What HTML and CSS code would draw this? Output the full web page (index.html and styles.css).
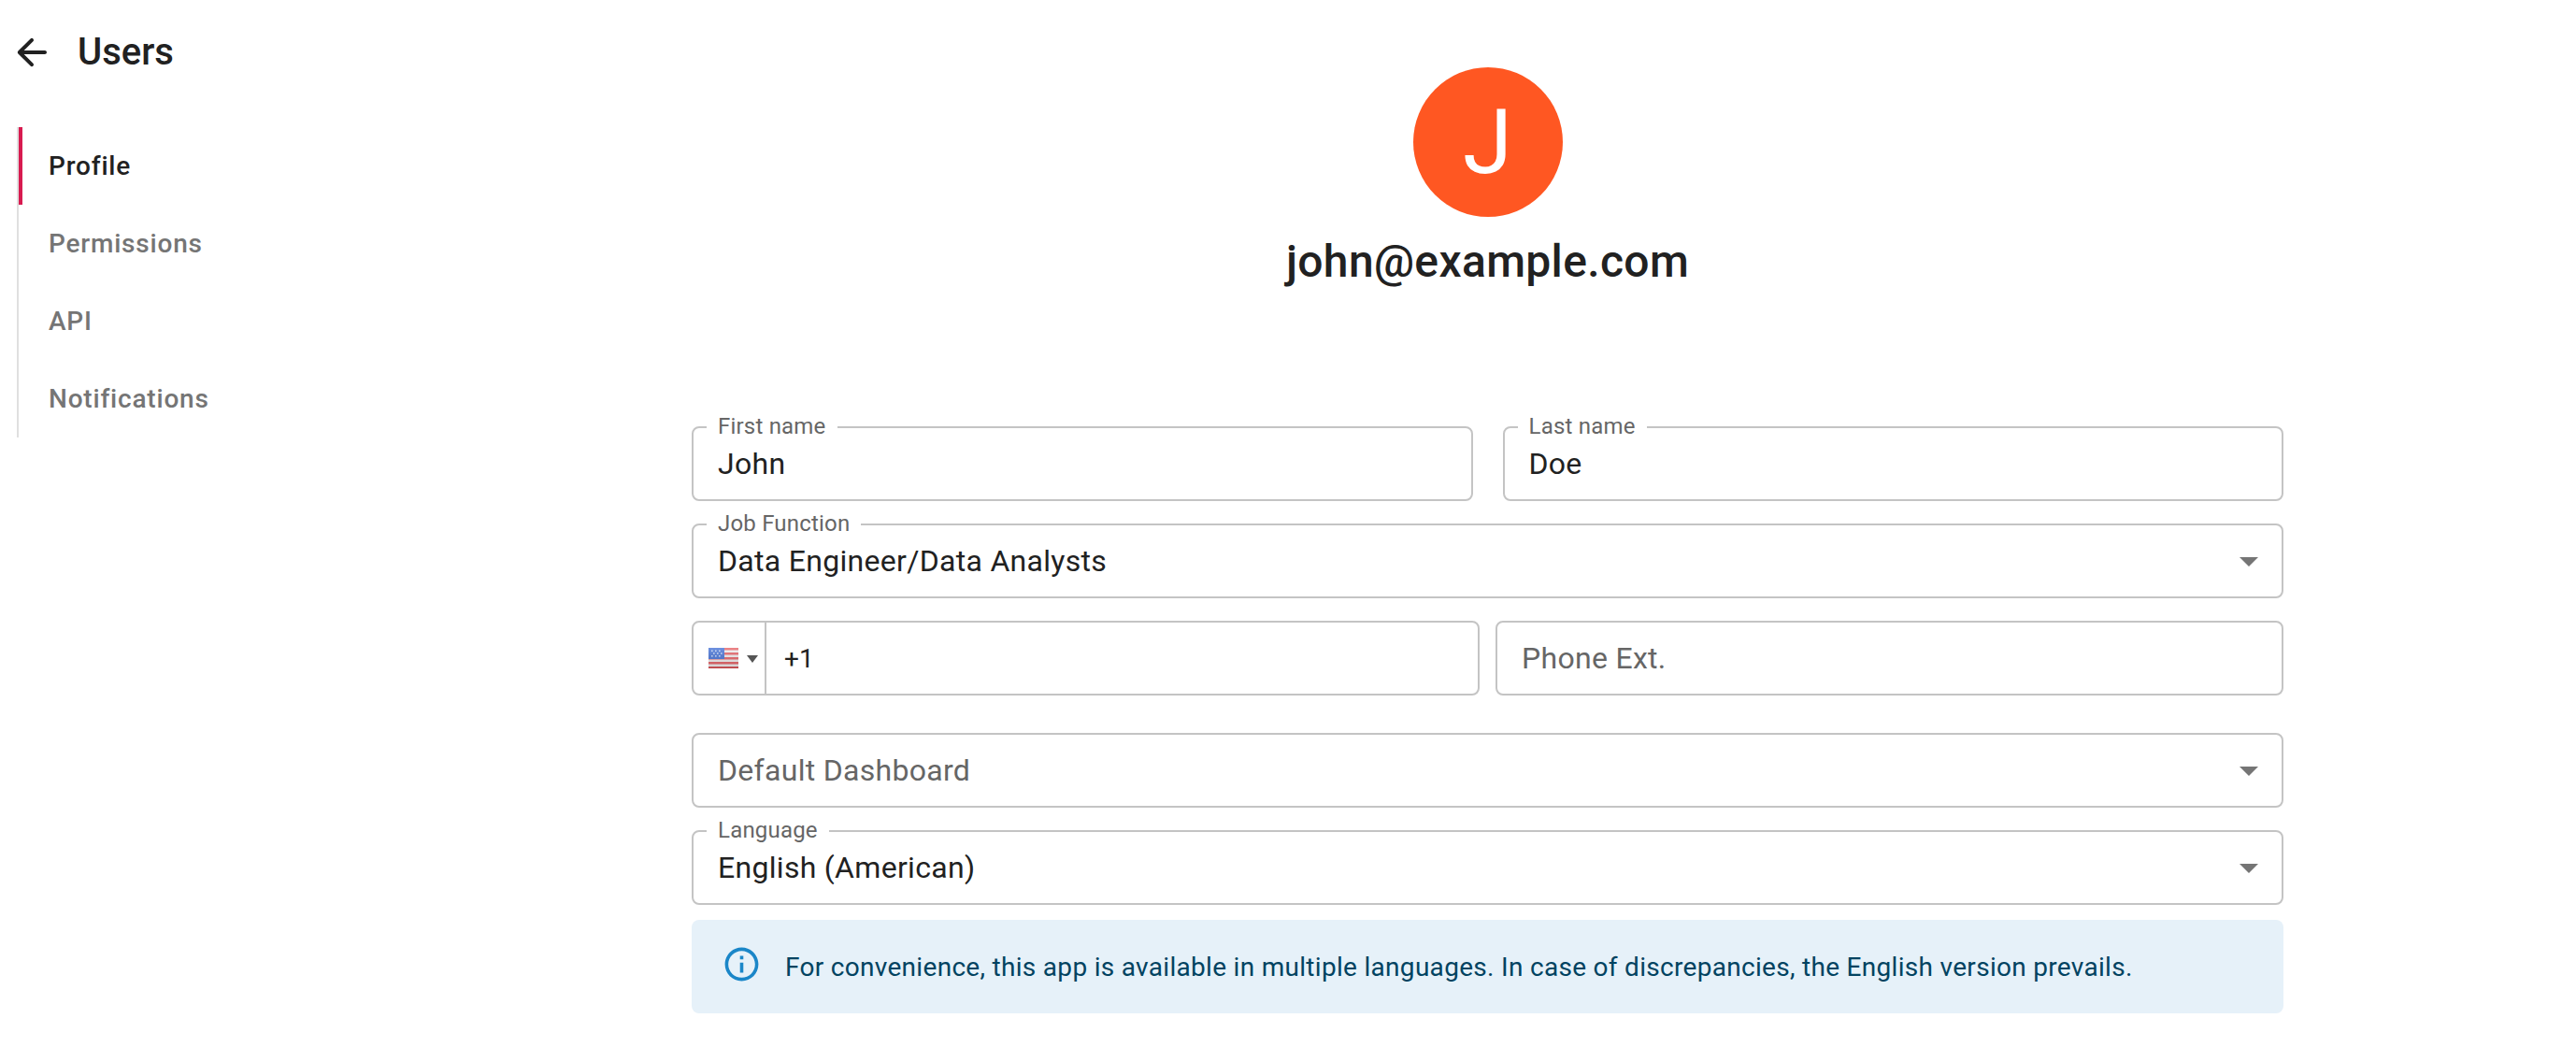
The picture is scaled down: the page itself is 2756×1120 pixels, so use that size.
FILE: index.html
```html
<!DOCTYPE html>
<html lang="en">
<head>
    <meta charset="UTF-8">
    <meta name="viewport" content="width=device-width, initial-scale=1.0">
    <title>Users - Profile</title>
    <link rel="stylesheet" href="styles.css">
</head>
<body>
    <div class="page">
        <aside class="sidebar">
            <div class="sidebar-head">
                <svg class="back-icon" viewBox="0 0 24 24"><path d="M19 11H7.83l4.88-4.88c.39-.39.39-1.03 0-1.42-.39-.39-1.02-.39-1.41 0l-6.59 6.59c-.39.39-.39 1.02 0 1.41l6.59 6.59c.39.39 1.02.39 1.41 0 .39-.39.39-1.02 0-1.41L7.83 13H19c.55 0 1-.45 1-1s-.45-1-1-1z"/></svg>
                <h1>Users</h1>
            </div>
            <nav class="tabs">
                <a class="tab active">Profile</a>
                <a class="tab">Permissions</a>
                <a class="tab">API</a>
                <a class="tab">Notifications</a>
            </nav>
        </aside>

        <main class="content">
            <div class="avatar">J</div>
            <h2 class="email">john@example.com</h2>

            <div class="row names">
                <div class="field">
                    <span class="field-label">First name</span>
                    <span class="value">John</span>
                </div>
                <div class="field">
                    <span class="field-label">Last name</span>
                    <span class="value">Doe</span>
                </div>
            </div>

            <div class="field select">
                <span class="field-label">Job Function</span>
                <span class="value">Data Engineer/Data Analysts</span>
                <span class="caret"></span>
            </div>

            <div class="row phones">
                <div class="field phone">
                    <div class="flag-select">
                        <svg class="flag" viewBox="0 0 32 22">
                            <defs>
                                <linearGradient id="gloss" x1="0" y1="0" x2="0" y2="1">
                                    <stop offset="0" stop-color="#fff" stop-opacity="0.2"/>
                                    <stop offset="1" stop-color="#000" stop-opacity="0.12"/>
                                </linearGradient>
                            </defs>
                            <rect width="32" height="22" fill="#f3f0f0"/>
                            <rect y="0" width="32" height="2.5" fill="#e8666a"/>
                            <rect y="5" width="32" height="2.5" fill="#e8666a"/>
                            <rect y="10" width="32" height="2.5" fill="#e8666a"/>
                            <rect y="15" width="32" height="2.5" fill="#e8666a"/>
                            <rect y="20" width="32" height="2" fill="#d9575b"/>
                            <rect width="17" height="12" fill="#4a76d8"/>
                            <g fill="#c4d4f5">
                                <rect x="3" y="2.5" width="1.6" height="1.6"/>
                                <rect x="7" y="2.5" width="1.6" height="1.6"/>
                                <rect x="11" y="2.5" width="1.6" height="1.6"/>
                                <rect x="5" y="5.2" width="1.6" height="1.6"/>
                                <rect x="9" y="5.2" width="1.6" height="1.6"/>
                                <rect x="13" y="5.2" width="1.6" height="1.6"/>
                                <rect x="3" y="8" width="1.6" height="1.6"/>
                                <rect x="7" y="8" width="1.6" height="1.6"/>
                                <rect x="11" y="8" width="1.6" height="1.6"/>
                            </g>
                            <rect width="32" height="22" fill="url(#gloss)"/>
                        </svg>
                        <span class="caret small"></span>
                    </div>
                    <span class="dial-code">+1</span>
                </div>
                <div class="field ext">
                    <span class="placeholder">Phone Ext.</span>
                </div>
            </div>

            <div class="field select dashboard">
                <span class="placeholder">Default Dashboard</span>
                <span class="caret"></span>
            </div>

            <div class="field select">
                <span class="field-label">Language</span>
                <span class="value">English (American)</span>
                <span class="caret"></span>
            </div>

            <div class="alert">
                <svg class="info-icon" viewBox="0 0 24 24"><path d="M11 7h2v2h-2zm0 4h2v6h-2zm1-9C6.48 2 2 6.48 2 12s4.48 10 10 10 10-4.48 10-10S17.52 2 12 2zm0 18c-4.41 0-8-3.59-8-8s3.59-8 8-8 8 3.59 8 8-3.59 8-8 8z"/></svg>
                <span>For convenience, this app is available in multiple languages. In case of discrepancies, the English version prevails.</span>
            </div>
        </main>
    </div>
</body>
</html>
```

FILE: styles.css
```css
/* General Styles */
body {
    font-family: 'Roboto', sans-serif;
    background: #fff;
    color: #212121;
    margin: 0;
    padding: 0;
}

.page {
    display: flex;
    height: 1120px;
    overflow: hidden;
}

/* Sidebar */
.sidebar {
    width: 740px;
    flex-shrink: 0;
}

.sidebar-head {
    display: flex;
    align-items: center;
    gap: 25px;
    height: 48px;
    padding: 32px 0 0 10px;
}

.back-icon {
    width: 48px;
    height: 48px;
    fill: #212121;
}

h1 {
    margin: 0;
    font-size: 40px;
    font-weight: 500;
    line-height: 48px;
}

.tabs {
    display: flex;
    flex-direction: column;
    width: 400px;
    margin: 56px 0 0 18px;
    border-left: 2px solid #e0e0e0;
}

.tab {
    display: flex;
    align-items: center;
    height: 83px;
    padding-left: 32px;
    font-size: 28px;
    font-weight: 500;
    letter-spacing: 0.8px;
    color: #757575;
}

.tab.active {
    color: #212121;
    box-shadow: inset 4px 0 0 #d81b50;
}

/* Profile form */
.content {
    width: 1703px;
    display: flex;
    flex-direction: column;
}

.avatar {
    width: 160px;
    height: 160px;
    margin: 72px auto 0;
    border-radius: 50%;
    background: #ff5722;
    color: #fff;
    font-size: 96px;
    line-height: 160px;
    text-align: center;
}

.email {
    margin: 20px 0 0;
    height: 204px;
    font-size: 48px;
    font-weight: 500;
    letter-spacing: 0.35px;
    line-height: 56px;
    text-align: center;
}

.row {
    display: flex;
}

.names {
    gap: 32px;
}

.phones {
    gap: 17px;
    margin-bottom: 40px;
}

.field {
    position: relative;
    flex: 1;
    display: flex;
    align-items: center;
    box-sizing: border-box;
    height: 80px;
    padding: 0 26px;
    margin-bottom: 24px;
    border: 2px solid #c4c4c4;
    border-radius: 8px;
    font-size: 32px;
    letter-spacing: 0.3px;
}

.field.select {
    flex: none;
}

.phones .field {
    margin-bottom: 0;
}

.field.phone {
    flex: none;
    width: 843px;
    padding: 0;
}

.field-label {
    position: absolute;
    top: -14px;
    left: 14px;
    padding: 0 12px;
    background: #fff;
    color: #666;
    font-size: 24px;
    letter-spacing: 0.2px;
    line-height: 24px;
}

.placeholder {
    color: #666;
}

.caret {
    position: absolute;
    top: 34px;
    right: 25px;
    width: 0;
    height: 0;
    border-left: 10px solid transparent;
    border-right: 10px solid transparent;
    border-top: 10px solid #757575;
}

.flag-select {
    position: relative;
    display: flex;
    align-items: center;
    box-sizing: border-box;
    width: 78px;
    height: 100%;
    padding-left: 16px;
    border-right: 2px solid #c4c4c4;
}

.flag {
    width: 32px;
    height: 22px;
    filter: blur(0.4px);
}

.caret.small {
    top: 35px;
    right: 7px;
    border-left-width: 6px;
    border-right-width: 6px;
    border-top: 8px solid #555;
}

.dial-code {
    padding-left: 19px;
    font-size: 28px;
    letter-spacing: 0;
}

.alert {
    display: flex;
    align-items: center;
    gap: 25px;
    box-sizing: border-box;
    height: 100px;
    margin-top: -8px;
    padding: 0 32px;
    border-radius: 8px;
    background: #e6f1f9;
    color: #014361;
    font-size: 28px;
    letter-spacing: 0.3px;
}

.info-icon {
    width: 43px;
    height: 43px;
    margin-top: -5px;
    fill: #1a86c8;
}
```
